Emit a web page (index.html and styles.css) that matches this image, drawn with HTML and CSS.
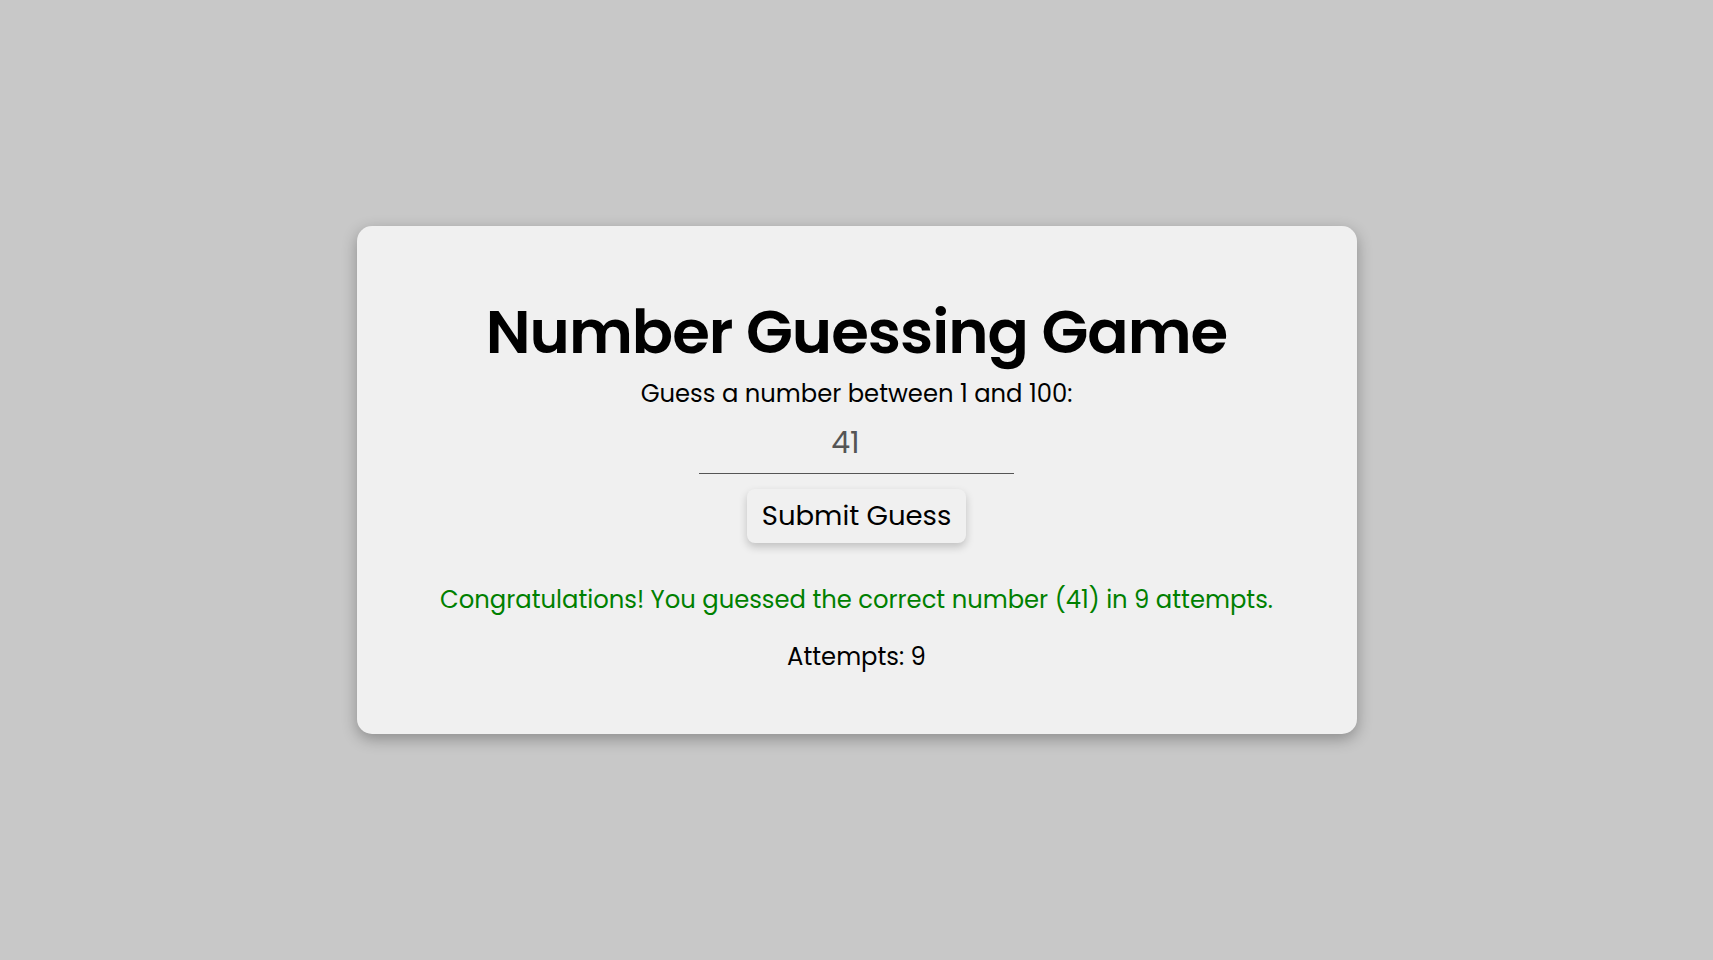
FILE: index.html
```html
<!DOCTYPE html>
<html lang="en">
<head>
<meta charset="utf-8">
<title>Number Guessing Game</title>
<link rel="stylesheet" href="styles.css">
</head>
<body>
<div class="card">
  <h1 class="title">Number Guessing Game</h1>
  <p class="prompt">Guess a number between 1 and 100:</p>
  <input class="guess" type="number" value="41">
  <button class="submit">Submit Guess</button>
  <p class="message">Congratulations! You guessed the correct number (41) in 9 attempts.</p>
  <p class="attempts">Attempts: 9</p>
</div>
</body>
</html>
```
FILE: styles.css
```css
html, body {
  margin: 0;
  padding: 0;
}
body {
  background: #c8c8c8;
  height: 100vh;
  display: flex;
  align-items: center;
  justify-content: center;
  font-family: Poppins, "Open Sans", sans-serif;
}
.card {
  width: 1000px;
  box-sizing: border-box;
  background: #f0f0f0;
  border-radius: 15px;
  box-shadow: 0 5px 15px rgba(0,0,0,0.3);
  padding: 64px 40px 60px;
  display: flex;
  flex-direction: column;
  align-items: center;
  text-align: center;
}
.title {
  margin: 0;
  font-size: 61px;
  font-weight: 600;
  letter-spacing: -1px;
  line-height: 83px;
  color: #000;
}
.prompt {
  margin: 4px 0 0;
  font-size: 24.25px;
  line-height: 1.4;
  color: #000;
}
.guess {
  margin-top: 5px;
  width: 315px;
  box-sizing: border-box;
  font-family: inherit;
  font-size: 30px;
  color: #555;
  text-align: center;
  background: transparent;
  border: none;
  border-bottom: 1px solid #555;
  padding: 4px 22px 7px 0;
  outline: none;
  -moz-appearance: textfield;
}
.guess::-webkit-inner-spin-button,
.guess::-webkit-outer-spin-button {
  -webkit-appearance: none;
  margin: 0;
}
.submit {
  margin-top: 15px;
  font-family: inherit;
  font-size: 27.5px;
  color: #000;
  background: #f0f0f0;
  border: none;
  border-radius: 8px;
  padding: 6px 15px;
  box-shadow: 0 4px 8px rgba(0,0,0,0.2);
  cursor: pointer;
}
.message {
  margin: 40px 0 0;
  font-size: 24.25px;
  color: #008000;
  line-height: 1.4;
}
.attempts {
  margin: 24px 0 0;
  font-size: 24.25px;
  color: #000;
  line-height: 1.4;
}
```
